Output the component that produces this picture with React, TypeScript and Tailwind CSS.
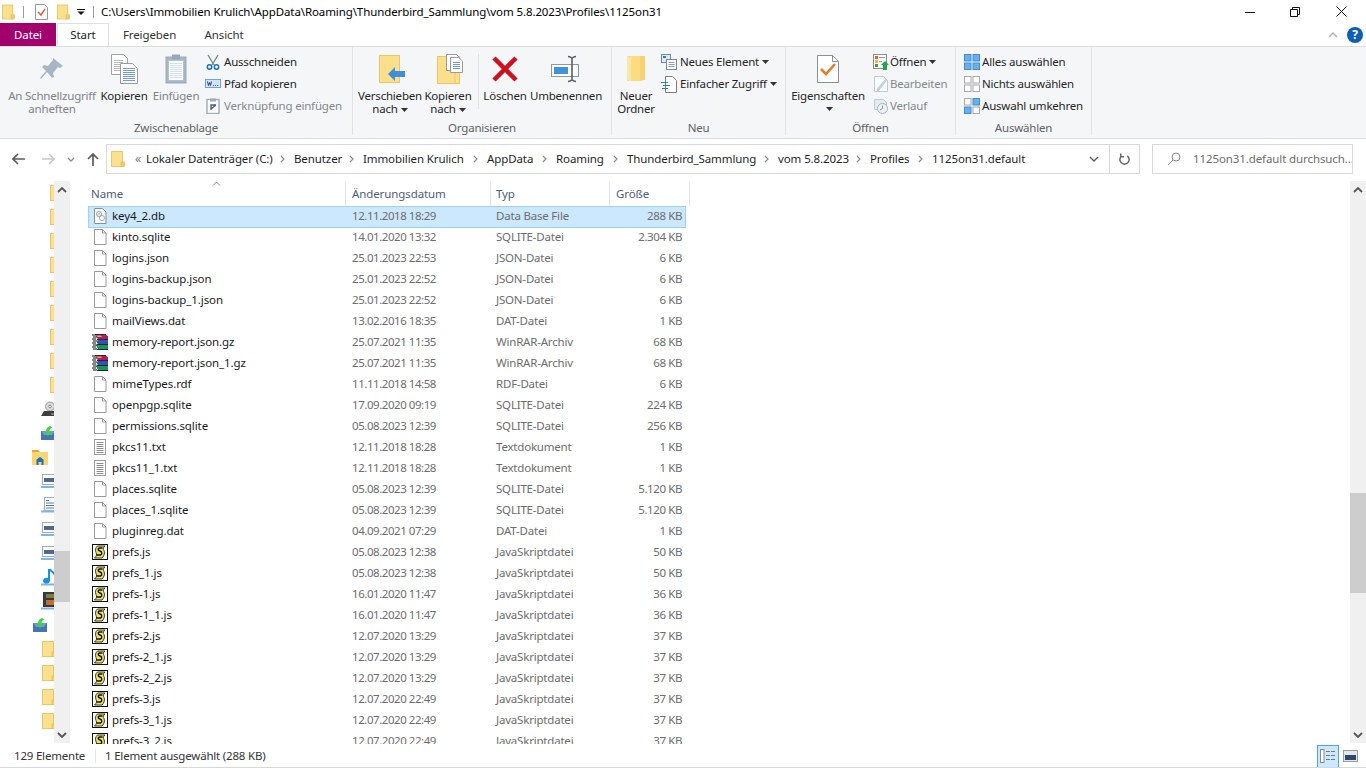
import React from "react";

const Folder = ({ className = "w-[14px] h-[16px]" }: { className?: string }) => (
  <svg viewBox="0 0 14 16" className={`${className} shrink-0`}>
    <rect x="0.5" y="0.5" width="11" height="15" fill="#fbe08f" stroke="#e8c766" />
    <rect x="10" y="11" width="3.5" height="4.5" fill="#f4cd6a" stroke="#e2bc58" strokeWidth="0.7" />
  </svg>
);
const Page = ({ children }: { children?: React.ReactNode }) => (
  <svg viewBox="0 0 16 18" className="w-[16px] h-[18px] shrink-0">
    <path d="M2.5 1.5h8l3.5 3.5v11.5h-11.5z" fill="#fff" stroke="#9a9a9a" />
    <path d="M10.5 1.5v3.5h3.5" fill="none" stroke="#9a9a9a" />
    {children}
  </svg>
);
const TextFile = () => (
  <svg viewBox="0 0 16 18" className="w-[16px] h-[18px] shrink-0">
    <rect x="2.5" y="1.5" width="11" height="15" fill="#fff" stroke="#9a9a9a" />
    {[4, 6, 8, 10, 12, 14].map((y) => (
      <path key={y} d={`M4.5 ${y + 0.5}h7`} stroke="#8c8c8c" />
    ))}
  </svg>
);
const KeyFile = () => (
  <svg viewBox="0 0 16 18" className="w-[16px] h-[18px] shrink-0">
    <path d="M2.5 1.5h8l3.5 3.5v11.5h-11.5z" fill="#f6fbff" stroke="#8d8d8d" />
    <circle cx="7" cy="7" r="2.5" fill="none" stroke="#9b9b9b" />
    <circle cx="10" cy="11" r="2.5" fill="none" stroke="#a8a8a8" />
    <circle cx="7" cy="7" r="0.8" fill="#9b9b9b" />
  </svg>
);
const Rar = () => (
  <svg viewBox="0 0 16 16" className="w-[16px] h-[16px] shrink-0">
    <path d="M3 1h11l2 1v3H5z" fill="#b5176a" />
    <path d="M4 1.500h5l1 1.500H6z" fill="#e8b040" />
    <path d="M4 6h12v4.500H6z" fill="#2a56b0" />
    <path d="M4 11h12v4.500H6z" fill="#0f9a5c" />
    <path d="M0 .5h3.500L6 5.500 3.500 10.500 6 15.500H2.500L0 10.500 2.500 5.500z" fill="#fff" />
    {[1, 3, 5, 7, 9, 11, 13, 15].map((y, i) => (
      <path key={y} d={`M${i % 2 ? 1 : 0} ${y}h4`} stroke="#111" strokeWidth="1" />
    ))}
    <path d="M5 5.500h11M5 10.500h11M5 15.500h11M3 .5h11" stroke="#111" strokeWidth="0.9" />
  </svg>
);
const Js = () => (
  <svg viewBox="0 0 16 16" className="w-[16px] h-[16px] shrink-0">
    <rect x="0.5" y="0.5" width="15" height="15" fill="#fff" stroke="#111" />
    <path d="M5.500 2h7.500c-2 1.500-1.800 3-1 4.500 1 2 .5 5-2 7.500H2.500c2-1.500 2.500-3.500 1.500-5.500C3 6 3.500 3.500 5.500 2z" fill="#eee65e" stroke="#222" strokeWidth="0.9" />
    <path d="M10.500 4H7.500C5.500 4.500 6 6.500 8 7s2.500 3 .5 4H4.500" fill="none" stroke="#111" strokeWidth="1.4" />
  </svg>
);

type Kind = "page" | "text" | "key" | "rar" | "js";
const FileIcon = ({ kind }: { kind: Kind }) =>
  kind === "page" ? <Page /> : kind === "text" ? <TextFile /> : kind === "key" ? <KeyFile /> : kind === "rar" ? <Rar /> : <Js />;

const files: [string, string, string, string, Kind][] = [
  ["key4_2.db", "12.11.2018 18:29", "Data Base File", "288 KB", "key"],
  ["kinto.sqlite", "14.01.2020 13:32", "SQLITE-Datei", "2.304 KB", "page"],
  ["logins.json", "25.01.2023 22:53", "JSON-Datei", "6 KB", "page"],
  ["logins-backup.json", "25.01.2023 22:52", "JSON-Datei", "6 KB", "page"],
  ["logins-backup_1.json", "25.01.2023 22:52", "JSON-Datei", "6 KB", "page"],
  ["mailViews.dat", "13.02.2016 18:35", "DAT-Datei", "1 KB", "page"],
  ["memory-report.json.gz", "25.07.2021 11:35", "WinRAR-Archiv", "68 KB", "rar"],
  ["memory-report.json_1.gz", "25.07.2021 11:35", "WinRAR-Archiv", "68 KB", "rar"],
  ["mimeTypes.rdf", "11.11.2018 14:58", "RDF-Datei", "6 KB", "page"],
  ["openpgp.sqlite", "17.09.2020 09:19", "SQLITE-Datei", "224 KB", "page"],
  ["permissions.sqlite", "05.08.2023 12:39", "SQLITE-Datei", "256 KB", "page"],
  ["pkcs11.txt", "12.11.2018 18:28", "Textdokument", "1 KB", "text"],
  ["pkcs11_1.txt", "12.11.2018 18:28", "Textdokument", "1 KB", "text"],
  ["places.sqlite", "05.08.2023 12:39", "SQLITE-Datei", "5.120 KB", "page"],
  ["places_1.sqlite", "05.08.2023 12:39", "SQLITE-Datei", "5.120 KB", "page"],
  ["pluginreg.dat", "04.09.2021 07:29", "DAT-Datei", "1 KB", "page"],
  ["prefs.js", "05.08.2023 12:38", "JavaSkriptdatei", "50 KB", "js"],
  ["prefs_1.js", "05.08.2023 12:38", "JavaSkriptdatei", "50 KB", "js"],
  ["prefs-1.js", "16.01.2020 11:47", "JavaSkriptdatei", "36 KB", "js"],
  ["prefs-1_1.js", "16.01.2020 11:47", "JavaSkriptdatei", "36 KB", "js"],
  ["prefs-2.js", "12.07.2020 13:29", "JavaSkriptdatei", "37 KB", "js"],
  ["prefs-2_1.js", "12.07.2020 13:29", "JavaSkriptdatei", "37 KB", "js"],
  ["prefs-2_2.js", "12.07.2020 13:29", "JavaSkriptdatei", "37 KB", "js"],
  ["prefs-3.js", "12.07.2020 22:49", "JavaSkriptdatei", "37 KB", "js"],
  ["prefs-3_1.js", "12.07.2020 22:49", "JavaSkriptdatei", "37 KB", "js"],
  ["prefs-3_2.js", "12.07.2020 22:49", "JavaSkriptdatei", "37 KB", "js"],
];

const Caret = () => (
  <svg viewBox="0 0 7 4" className="inline-block w-[7px] h-[4px] ml-[3px] align-middle"><path d="M0 0h7L3.5 4z" fill="#333" /></svg>
);

/* ribbon large icons */
const PinIcon = () => (
  <svg viewBox="0 0 24 24" className="w-[24px] h-[24px]">
    <path d="M13 1l10 8-3 2-2-1-5 6 1 4-2 1-5-6-6 7-1-1 6-7-4-4 2-2 4 1 5-6z" fill="#a9b5c6" />
  </svg>
);
const DocLines = ({ x, y, w, h }: { x: number; y: number; w: number; h: number }) => (
  <g>
    <path d={`M${x + .5} ${y + .5}h${w * 0.7}l${w * 0.3} ${w * 0.3}v${h - w * 0.3}h-${w}z`} fill="#fff" stroke="#9b9b9b" />
    {Array.from({ length: Math.floor((h - 6) / 2) }).map((_, i) => (
      <path key={i} d={`M${x + 3} ${y + 5.5 + i * 2}h${w - 5}`} stroke="#6f9ed3" />
    ))}
  </g>
);
const CopyIcon = () => (
  <svg viewBox="0 0 27 30" className="w-[27px] h-[30px]">
    <path d="M.5.5h12l4 4v16H.5z" fill="#fff" stroke="#a0a0a0" />
    {[6, 8, 10, 12, 14, 16].map((y) => <path key={y} d={`M3 ${y + .5}h9`} stroke="#b9b9b9" />)}
    <DocLines x={9} y={9} w={17} h={20} />
  </svg>
);
const PasteIcon = () => (
  <svg viewBox="0 0 22 30" className="w-[22px] h-[30px]">
    <rect x="1" y="3" width="20" height="26" fill="#a8b6c8" stroke="#9aa9bc" />
    <rect x="3.5" y="6.5" width="15" height="20" fill="#fdfdfd" stroke="#b7c1cf" />
    {[9, 11, 13, 15, 17, 19, 21, 23].map((y) => <path key={y} d={`M5 ${y + .5}h12`} stroke="#cfe0f2" />)}
    <rect x="7" y="0.5" width="8" height="5" fill="#98a6b8" />
  </svg>
);
const ScissorsIcon = () => (
  <svg viewBox="0 0 16 16" className="w-[16px] h-[16px]">
    <path d="M3 1l6 10M13 1l-6 10" stroke="#7d8794" strokeWidth="1.4" fill="none" />
    <circle cx="4.5" cy="13" r="2.2" fill="none" stroke="#1d6fb8" strokeWidth="1.5" />
    <circle cx="11.5" cy="13" r="2.2" fill="none" stroke="#1d6fb8" strokeWidth="1.5" />
  </svg>
);
const PathIcon = () => (
  <svg viewBox="0 0 16 16" className="w-[16px] h-[16px]">
    <rect x="0.5" y="3.5" width="15" height="8" fill="#cfe4f7" stroke="#6ea6d8" />
    <path d="M2.5 5.5l1 4 1-3 1 3 1-4M8 9.5h.8M10.2 9.5h.8M12.4 9.5h.8" fill="none" stroke="#29425e" />
  </svg>
);
const LinkPasteIcon = () => (
  <svg viewBox="0 0 16 16" className="w-[16px] h-[16px]">
    <rect x="2" y="1.5" width="12" height="14" fill="#fff" stroke="#9dabbd" strokeWidth="1.4" />
    <rect x="5" y="0.5" width="6" height="3" fill="#9dabbd" />
    <path d="M6 12V7h5M6 11l5-4" fill="none" stroke="#3a5c82" strokeWidth="1.3" />
  </svg>
);
const MoveIcon = () => (
  <svg viewBox="0 0 26 28" className="w-[26px] h-[28px] ml-[4px]">
    <rect x="0.5" y="0.5" width="20" height="27" fill="#fcdf8a" stroke="#e8c66a" />
    <path d="M9 19l7-7v4h10v6H16v4z" fill="#3d8fd8" />
  </svg>
);
const CopyToIcon = () => (
  <svg viewBox="0 0 26 30" className="w-[26px] h-[30px] ml-[3px]">
    <rect x="0.5" y="2.5" width="22" height="27" fill="#fcdf8a" stroke="#e8c66a" />
    <path d="M18 2.5v27" stroke="#e8c66a" />
    <path d="M9.5.5h10l3 3v13h-13z" fill="#fff" stroke="#9b9b9b" />
    <DocLines x={13} y={3} w={12} h={15} />
  </svg>
);
const DeleteIcon = () => (
  <svg viewBox="0 0 26 26" className="w-[26px] h-[26px]">
    <path d="M2 2l22 22M24 2L2 24" stroke="#d0101f" strokeWidth="4.5" />
  </svg>
);
const RenameIcon = () => (
  <svg viewBox="0 0 30 28" className="w-[30px] h-[28px]">
    <rect x="0.5" y="9.5" width="27" height="12" fill="#fff" stroke="#8d98a6" />
    <rect x="3" y="12" width="14" height="7" fill="#3d93de" />
    <path d="M17 1.5c2 0 3 1 4 1.5 1-.5 2-1.5 4-1.5M21 3v22M17 26.5c2 0 3-1 4-1.5 1 .5 2 1.5 4 1.5" fill="none" stroke="#56606d" strokeWidth="1.6" />
  </svg>
);
const NewFolderIcon = () => (
  <svg viewBox="0 0 20 28" className="w-[20px] h-[28px]">
    <path d="M1 1h18v22l-3 3H1z" fill="#fbdc80" />
    <path d="M1 1l4 2v24l-4-3z" fill="#f7e6ae" />
    <path d="M14 1h5v24h-5z" fill="#f8d06f" />
  </svg>
);
const NewItemIcon = () => (
  <svg viewBox="0 0 16 16" className="w-[16px] h-[16px]">
    <rect x="0.5" y="0.5" width="9" height="8" fill="#dbe9f7" stroke="#6a8cb0" />
    <rect x="2" y="2" width="3" height="2" fill="#3a78b8" />
    <rect x="5.5" y="5.5" width="10" height="10" fill="#fff" stroke="#7b8794" />
    <path d="M7.5 8.5h6M7.5 10.5h6M7.5 12.5h6" stroke="#7ca6d0" />
  </svg>
);
const EasyIcon = () => (
  <svg viewBox="0 0 16 18" className="w-[16px] h-[18px]">
    <path d="M4.5 1.5h7l4 4v12h-11z" fill="#fff" stroke="#7c7c7c" />
    <path d="M0 7.5h7M2 10.5h7M1 13.5h6" stroke="#2a7fc4" />
  </svg>
);
const PropsIcon = () => (
  <svg viewBox="0 0 22 28" className="w-[22px] h-[28px]">
    <path d="M.5.5h15l6 6v21H.5z" fill="#fff" stroke="#8f8f8f" />
    <path d="M15.5.5v6h6" fill="none" stroke="#8f8f8f" />
    <path d="M4 14l5 5 9-10" fill="none" stroke="#e07f2e" strokeWidth="2.6" />
  </svg>
);
const OpenIcon = () => (
  <svg viewBox="0 0 16 16" className="w-[16px] h-[16px]">
    <rect x="0.5" y="0.5" width="13" height="14" fill="#fff" stroke="#8b8b8b" />
    <rect x="2" y="2" width="3" height="3" fill="#e25d30" /><path d="M6 3.5h6" stroke="#999" />
    <rect x="2" y="6" width="3" height="3" fill="#e9b834" /><path d="M6 7.5h3" stroke="#999" />
    <rect x="2" y="10" width="3" height="3" fill="#4a9a3d" />
    <path d="M12 7l4 4h-2v5h-4v-5H8z" fill="#22a84a" />
  </svg>
);
const EditIcon = () => (
  <svg viewBox="0 0 16 18" className="w-[16px] h-[18px]">
    <path d="M1.5 1.5h9l4 4v11h-13z" fill="#fafcfe" stroke="#bccadb" />
    <path d="M14 5L6 15l-2 1 .5-2.5L13 4z" fill="#c9d7e8" stroke="#aebfd2" strokeWidth=".7" />
  </svg>
);
const HistoryIcon = () => (
  <svg viewBox="0 0 16 16" className="w-[16px] h-[16px]">
    <path d="M1.5 1.5h9l3 3v7h-12z" fill="#e4ebf3" stroke="#c2ccd8" />
    <circle cx="9.5" cy="10.5" r="5" fill="#eef2f6" stroke="#a5b0bd" />
    <path d="M9.5 7.5v3l-2.5 1.5" fill="none" stroke="#8b97a5" />
  </svg>
);
const Grid = ({ fills }: { fills: string[] }) => (
  <svg viewBox="0 0 16 16" className="w-[16px] h-[16px]">
    {[[0, 0], [8.5, 0], [0, 8.5], [8.5, 8.5]].map(([x, y], i) => (
      <rect key={i} x={x + 0.5} y={y + 0.5} width="6.5" height="6.5" fill={fills[i]} stroke={fills[i] === "#fff" ? "#a8a8a8" : "#3f8fd2"} />
    ))}
  </svg>
);

const Large = ({ icon, lines, caret, muted, boxClass }: { icon: React.ReactNode; lines: string[]; caret?: boolean; muted?: boolean; boxClass: string }) => (
  <div className={`${boxClass} flex flex-col items-center shrink-0`}>
    <div className="h-[36px] mb-[2px] flex items-center justify-center">{icon}</div>
    <div className={`text-center leading-[13px] whitespace-nowrap ${muted ? "text-[#7f8388]" : "text-[#262626]"}`}>
      {lines.map((l, i) => (
        <div key={i}>
          {l}
          {caret && i === lines.length - 1 && l && <Caret />}
        </div>
      ))}
    </div>
  </div>
);

const Small = ({ icon, label, caret, muted, textClass }: { icon: React.ReactNode; label: string; caret?: boolean; muted?: boolean; textClass: string }) => (
  <div className="h-[22px] flex items-center whitespace-nowrap">
    <div className={`${textClass} flex items-center justify-start shrink-0`}>{icon}</div>
    <span className={muted ? "text-[#84888d]" : "text-[#262626]"}>{label}</span>
    {caret && <Caret />}
  </div>
);

const Group = ({ label, w, children }: { label: string; w: string; children: React.ReactNode }) => (
  <div className={`${w} shrink-0 flex flex-col border-r border-[#e2e3e5] mb-[3px]`}>
    <div className="h-[72px] flex pt-[4px]">{children}</div>
    <div className="text-center text-[#5e6165] leading-[14px] mt-[4px]">{label}</div>
  </div>
);

const VSep = () => <div className="w-px h-[55px] mt-[3px] bg-[#e2e3e5] shrink-0" />;

const crumbs: [string, string][] = [
  ["Lokaler Datenträger (C:)", "w-[148px]"],
  ["Benutzer", "w-[69px]"],
  ["Immobilien Krulich", "w-[124px]"],
  ["AppData", "w-[69px]"],
  ["Roaming", "w-[71px]"],
  ["Thunderbird_Sammlung", "w-[151px]"],
  ["vom 5.8.2023", "w-[92px]"],
  ["Profiles", "w-[62px]"],
  ["1125on31.default", "w-[100px]"],
];

const Chev = ({ up, className = "" }: { up?: boolean; className?: string }) => (
  <svg viewBox="0 0 10 6" className={`w-[10px] h-[6px] ${className}`}>
    <path d={up ? "M1 5l4-4 4 4" : "M1 1l4 4 4-4"} fill="none" stroke="#555" strokeWidth="1.8" />
  </svg>
);

const Monitor = () => (
  <svg viewBox="0 0 14 16" className="w-[14px] h-[16px] shrink-0">
    <rect x="1.5" y="1.5" width="12" height="10" fill="#fff" stroke="#9bb0c8" />
    <rect x="3" y="5" width="10" height="4" fill="#4d6a8c" />
    <path d="M0 14h14" stroke="#7db5e5" strokeWidth="2" />
  </svg>
);
const DocMon = () => (
  <svg viewBox="0 0 14 16" className="w-[14px] h-[16px] shrink-0">
    <rect x="3.5" y="0.5" width="10" height="13" fill="#fff" stroke="#9bb0c8" />
    <path d="M5 3.5h3M5 6h8M5 8.5h8M5 11h8" stroke="#4d7ea8" />
    <path d="M0 14.5h14" stroke="#7db5e5" strokeWidth="2" />
  </svg>
);
const Music = () => (
  <svg viewBox="0 0 14 18" className="w-[14px] h-[18px] shrink-0">
    <path d="M9 1v11.5a3.5 3 0 1 1-2-2.5V1z" fill="#1c8fe0" />
    <path d="M9 1c1 3 4 3 5 6" stroke="#1c8fe0" strokeWidth="2" fill="none" />
    <path d="M0 16.5h14" stroke="#7db5e5" strokeWidth="2" />
  </svg>
);
const Video = () => (
  <svg viewBox="0 0 14 18" className="w-[14px] h-[18px] shrink-0">
    <rect x="2" y="0" width="12" height="15" fill="#303a44" />
    <rect x="5" y="2" width="9" height="4" fill="#8c7a3c" />
    <rect x="5" y="8" width="9" height="5" fill="#c86a2c" />
    <path d="M0 16.5h14" stroke="#7db5e5" strokeWidth="2" />
  </svg>
);
const Drive = () => (
  <svg viewBox="0 0 14 16" className="w-[14px] h-[16px] shrink-0">
    <circle cx="9" cy="5.5" r="4.5" fill="#d9d9d9" stroke="#9a9a9a" />
    <circle cx="9" cy="5.5" r="1.3" fill="#fff" stroke="#888" />
    <path d="M3 10h11v5H0z" fill="#3f3f3f" />
    <path d="M10 13h3" stroke="#8fd18f" />
  </svg>
);
const Sync = () => (
  <svg viewBox="0 0 14 14" className="w-[14px] h-[14px] shrink-0">
    <path d="M0 5h14v9H0z" fill="#4574b0" />
    <path d="M0 5l3 4h8l3-4" fill="#6f9ad0" />
    <path d="M9 0c-3 1-4 3-4 5H3l4 5 4-5H8.5c0-1 1-3 3-3.500z" fill="#3fd24a" />
  </svg>
);
const HomeFolder = () => (
  <svg viewBox="0 0 16 15" className="w-[16px] h-[15px] shrink-0">
    <path d="M0 0h6l2 2H0z" fill="#e8a33a" />
    <rect x="0" y="2" width="16" height="13" fill="#fbd56e" />
    <path d="M4.500 15V9.500L8 7l3.500 2.500V15H9.500v-3h-3v3z" fill="#1b6fc2" />
  </svg>
);
const Globe = () => (
  <svg viewBox="0 0 16 8" className="w-[16px] h-[7px] shrink-0 self-end">
    <path d="M2 8a6 6 0 0 1 12 0z" fill="#4f9fdc" />
    <path d="M0 7.500h16" stroke="#2a74b5" />
  </svg>
);

const navRows: [React.ReactNode, string][] = [
  ...Array.from({ length: 9 }, (): [React.ReactNode, string] => [<Folder className="w-[14px] h-[16px]" />, "pl-[50px]"]),
  [<Drive />, "pl-[41px]"],
  [<Sync />, "pl-[41px]"],
  [<HomeFolder />, "pl-[32px]"],
  [<Monitor />, "pl-[41px]"],
  [<DocMon />, "pl-[41px]"],
  [<Monitor />, "pl-[41px]"],
  [<Monitor />, "pl-[41px]"],
  [<Music />, "pl-[41px]"],
  [<Video />, "pl-[41px]"],
  [<Sync />, "pl-[33px]"],
  [<Folder className="w-[14px] h-[16px]" />, "pl-[42px]"],
  [<Folder className="w-[14px] h-[16px]" />, "pl-[42px]"],
  [<Folder className="w-[14px] h-[16px]" />, "pl-[42px]"],
  [<Folder className="w-[14px] h-[16px]" />, "pl-[42px]"],
  [<Globe />, "pl-[32px]"],
];

const Scrollbar = ({ thumbTop, thumbH, w }: { thumbTop: string; thumbH: string; w: string }) => (
  <div className={`${w} shrink-0 bg-[#f0f0f0] mt-[3px] mb-[1px] flex flex-col items-center relative`}>
    <div className="h-[17px] flex items-center justify-center shrink-0"><Chev up /></div>
    <div className={`${thumbTop} ${thumbH} w-full bg-[#cdcdcd] shrink-0`} />
    <div className="flex-1" />
    <div className="h-[17px] flex items-center justify-center shrink-0"><Chev /></div>
  </div>
);

export default function App() {
  return (
    <div className="w-[1366px] h-[768px] overflow-hidden bg-white flex flex-col font-['Noto_Sans','Open_Sans',sans-serif] text-[11.5px] text-[#1a1a1a] tracking-[-0.1px]">
      {/* title bar */}
      <div className="h-[23px] flex items-center shrink-0 pl-[2px]">
        <Folder className="w-[13px] h-[16px]" />
        <div className="w-px h-[12px] bg-[#9a9a9a] ml-[8px]" />
        <svg viewBox="0 0 13 16" className="w-[13px] h-[16px] ml-[11px]">
          <path d="M.5.5h9l3 3v12H.5z" fill="#fff" stroke="#999" />
          <path d="M3 8l3 3 4-6" fill="none" stroke="#d8603a" strokeWidth="1.5" />
        </svg>
        <Folder className="w-[13px] h-[16px] ml-[9px]" />
        <svg viewBox="0 0 8 6" className="w-[8px] h-[6px] ml-[7px]">
          <path d="M0 .5h8" stroke="#111" /><path d="M.5 2.500h7L4 6z" fill="#111" />
        </svg>
        <div className="w-px h-[12px] bg-[#9a9a9a] ml-[8px]" />
        <div className="ml-[7px] whitespace-nowrap text-black">C:\Users\Immobilien Krulich\AppData\Roaming\Thunderbird_Sammlung\vom 5.8.2023\Profiles\1125on31</div>
        <div className="flex-1" />
        <svg viewBox="0 0 10 10" className="w-[10px] h-[10px]"><path d="M0 5.500h10" stroke="#111" /></svg>
        <svg viewBox="0 0 10 10" className="w-[10px] h-[10px] ml-[35px]"><path d="M.5 2.500h7v7h-7zM2.500 2.500v-2h7v7h-2" fill="none" stroke="#111" /></svg>
        <svg viewBox="0 0 11 11" className="w-[11px] h-[11px] ml-[36px] mr-[19px]"><path d="M.5.5l10 10M10.500.5l-10 10" stroke="#111" /></svg>
      </div>

      {/* tabs */}
      <div className="h-[23px] flex shrink-0 items-stretch">
        <div className="w-[56px] bg-[#a2006d] text-white flex items-center justify-center">Datei</div>
        <div className="w-[52px] ml-[1px] border-x border-t border-[#e0e1e3] flex items-center justify-center">Start</div>
        <div className="ml-[14px] w-[53px] flex items-center justify-center text-[#333]">Freigeben</div>
        <div className="ml-[28px] w-[40px] flex items-center justify-center text-[#333]">Ansicht</div>
        <div className="flex-1" />
        <div className="flex items-center pr-[3px]">
          <svg viewBox="0 0 10 6" className="w-[10px] h-[6px] mr-[9px]"><path d="M1 5l4-4 4 4" fill="none" stroke="#b5b5b5" strokeWidth="1.5" /></svg>
          <div className="w-[16px] h-[16px] rounded-full bg-[#0d5fb5] text-white font-bold text-[12px] leading-[16px] text-center">?</div>
        </div>
      </div>

      {/* ribbon */}
      <div className="h-[93px] bg-[#f5f6f7] border-y border-[#dadbdc] flex shrink-0 tracking-[-0.2px]">
        <Group label="Zwischenablage" w="w-[353px]">
          <Large boxClass="w-[104px]" icon={<PinIcon />} lines={["An Schnellzugriff", "anheften"]} muted />
          <Large boxClass="w-[48px] -ml-[4px]" icon={<CopyIcon />} lines={["Kopieren"]} />
          <Large boxClass="w-[52px] ml-[2px]" icon={<PasteIcon />} lines={["Einfügen"]} muted />
          <div className="ml-[3px]">
            <Small textClass="w-[19px]" icon={<ScissorsIcon />} label="Ausschneiden" />
            <Small textClass="w-[19px]" icon={<PathIcon />} label="Pfad kopieren" />
            <Small textClass="w-[19px]" icon={<LinkPasteIcon />} label="Verknüpfung einfügen" muted />
          </div>
        </Group>
        <Group label="Organisieren" w="w-[259px]">
          <Large boxClass="w-[66px] ml-[4px]" icon={<MoveIcon />} lines={["Verschieben", "nach"]} caret />
          <Large boxClass="w-[50px]" icon={<CopyToIcon />} lines={["Kopieren", "nach"]} caret />
          <div className="w-[5px]" />
          <VSep />
          <Large boxClass="w-[46px] ml-[3px]" icon={<DeleteIcon />} lines={["Löschen"]} />
          <Large boxClass="w-[74px] ml-[1px]" icon={<RenameIcon />} lines={["Umbenennen"]} />
        </Group>
        <Group label="Neu" w="w-[174px]">
          <Large boxClass="w-[44px] ml-[2px]" icon={<NewFolderIcon />} lines={["Neuer", "Ordner"]} />
          <div className="ml-[3px]">
            <Small textClass="w-[19px]" icon={<NewItemIcon />} label="Neues Element" caret />
            <Small textClass="w-[19px]" icon={<EasyIcon />} label="Einfacher Zugriff" caret />
          </div>
        </Group>
        <Group label="Öffnen" w="w-[170px]">
          <div className="ml-[2px]">
            <Large boxClass="w-[80px]" icon={<PropsIcon />} lines={["Eigenschaften"]} />
            <div className="text-center leading-[11px] w-[80px]"><Caret /></div>
          </div>
          <div className="ml-[5px]">
            <Small textClass="w-[17px]" icon={<OpenIcon />} label="Öffnen" caret />
            <Small textClass="w-[17px]" icon={<EditIcon />} label="Bearbeiten" muted />
            <Small textClass="w-[17px]" icon={<HistoryIcon />} label="Verlauf" muted />
          </div>
        </Group>
        <Group label="Auswählen" w="w-[136px]">
          <div className="ml-[8px]">
            <Small textClass="w-[18px]" icon={<Grid fills={["#69b0ea", "#69b0ea", "#69b0ea", "#69b0ea"]} />} label="Alles auswählen" />
            <Small textClass="w-[18px]" icon={<Grid fills={["#fff", "#fff", "#fff", "#fff"]} />} label="Nichts auswählen" />
            <Small textClass="w-[18px]" icon={<Grid fills={["#fff", "#69b0ea", "#69b0ea", "#fff"]} />} label="Auswahl umkehren" />
          </div>
        </Group>
      </div>

      {/* address row */}
      <div className="h-[39px] flex items-center shrink-0 pl-[12px] pt-[1px]">
        <svg viewBox="0 0 14 12" className="w-[14px] h-[12px]"><path d="M1 6h12M6 1L1 6l5 5" fill="none" stroke="#5c5c5c" strokeWidth="1.6" /></svg>
        <svg viewBox="0 0 14 12" className="w-[14px] h-[12px] ml-[15px]"><path d="M1 6h12M8 1l5 5-5 5" fill="none" stroke="#c8c8c8" strokeWidth="1.6" /></svg>
        <svg viewBox="0 0 8 5" className="w-[8px] h-[5px] ml-[12px]"><path d="M1 1l3 3 3-3" fill="none" stroke="#8a8a8a" strokeWidth="1.3" /></svg>
        <svg viewBox="0 0 12 14" className="w-[12px] h-[14px] ml-[12px]"><path d="M6 14V2M1 7l5-5 5 5" fill="none" stroke="#5c5c5c" strokeWidth="1.7" /></svg>
        <div className="ml-[7px] w-[1034px] h-[30px] border border-[#d9d9d9] flex items-center text-[#1f1f1f]">
          <Folder className="w-[14px] h-[16px] ml-[4px]" />
          <span className="ml-[6px] w-[14px] text-[#777] text-[12px] shrink-0 text-center">«</span>
          <div className="flex items-center ml-[1px] whitespace-nowrap">
            {crumbs.map(([c, w], i) => (
              <div key={c} className={`${w} flex items-center shrink-0`}>
                <span className="flex-1">{c}</span>
                {i < crumbs.length - 1 && (
                  <svg viewBox="0 0 5 8" className="w-[5px] h-[8px] mr-[9px]"><path d="M1 1l3 3-3 3" fill="none" stroke="#8a8a8a" strokeWidth="1.2" /></svg>
                )}
              </div>
            ))}
          </div>
          <div className="flex-1" />
          <svg viewBox="0 0 10 6" className="w-[10px] h-[6px] mr-[10px]"><path d="M1 1l4 4 4-4" fill="none" stroke="#555" strokeWidth="1.3" /></svg>
          <div className="w-[30px] h-full border-l border-[#d9d9d9] flex items-center justify-center shrink-0">
            <svg viewBox="0 0 14 14" className="w-[13px] h-[13px]"><path d="M4 3a5 5 0 1 0 6 0M3 .5V4h3.500" fill="none" stroke="#666" strokeWidth="1.6" /></svg>
          </div>
        </div>
        <div className="ml-[12px] w-[201px] h-[30px] border border-[#d9d9d9] flex items-center text-[#6d6d6d] whitespace-nowrap overflow-hidden">
          <svg viewBox="0 0 14 14" className="w-[14px] h-[14px] ml-[14px] shrink-0"><circle cx="9" cy="5" r="4" fill="none" stroke="#8a8a8a" /><path d="M6 8l-5 5" stroke="#8a8a8a" /></svg>
          <span className="ml-[12px]">1125on31.default durchsuch...</span>
        </div>
      </div>

      {/* main */}
      <div className="flex-1 flex min-h-0">
        <div className="w-[54px] shrink-0 overflow-hidden pt-[3px]">
          {navRows.map(([icon, pl], i) => (
            <div key={i} className={`h-[24px] flex items-center overflow-hidden ${pl}`}>{icon}</div>
          ))}
        </div>
        <Scrollbar w="w-[16px]" thumbTop="mt-[353px]" thumbH="h-[51px]" />
        <div className="flex-1 min-w-0 overflow-hidden pl-[18px] pt-[4px] relative">
          <div className="absolute left-[142px] top-[3px]">
            <svg viewBox="0 0 9 5" className="w-[9px] h-[5px]"><path d="M1 4.500L4.500 1 8 4.500" fill="none" stroke="#888" /></svg>
          </div>
          <div className="flex h-[24px] text-[#4c607a] items-center">
            <div className="w-[258px] h-full border-r border-[#e5e5e5] pl-[3px] flex items-center">Name</div>
            <div className="w-[145px] h-full border-r border-[#e5e5e5] pl-[6px] flex items-center">Änderungsdatum</div>
            <div className="w-[119px] h-full border-r border-[#e5e5e5] pl-[5px] flex items-center">Typ</div>
            <div className="w-[80px] h-full border-r border-[#e5e5e5] pl-[6px] flex items-center">Größe</div>
          </div>
          {files.map(([n, d, t, s, k], i) => (
            <div
              key={n}
              className={`w-[598px] flex items-center whitespace-nowrap text-[#6d6d6d] pb-[2px] ${i === 0 ? "h-[22px] -mb-[1px] bg-[#cce8ff] border border-[#99d1ff]" : "h-[21px] border border-transparent"}`}
            >
              <div className="w-[257px] shrink-0 flex items-center pl-[3px] text-[#1a1a1a]">
                <div className="w-[16px] flex justify-center shrink-0"><FileIcon kind={k} /></div>
                <span className="ml-[4px]">{n}</span>
              </div>
              <div className="w-[145px] shrink-0 pl-[6px] tracking-[-0.45px]">{d}</div>
              <div className="w-[119px] shrink-0 pl-[5px] tracking-[-0.2px]">{t}</div>
              <div className="w-[72px] shrink-0 text-right tracking-[-0.4px]">{s}</div>
            </div>
          ))}
        </div>
        <Scrollbar w="w-[16px]" thumbTop="mt-[295px]" thumbH="h-[100px]" />
      </div>

      {/* status bar */}
      <div className="h-[24px] shrink-0 flex items-center pl-[14px] text-[#333] border-b border-[#d8d8d8] tracking-[-0.2px]">
        <span className="w-[81px] whitespace-nowrap">129 Elemente</span>
        <div className="w-px h-[14px] bg-[#e8e8e8]" />
        <span className="ml-[9px] whitespace-nowrap">1 Element ausgewählt (288 KB)</span>
        <div className="flex-1" />
        <div className="w-[22px] h-[22px] bg-[#cce8ff] border border-[#52a8d8] border-b-0 flex items-center justify-center">
          <svg viewBox="0 0 16 14" className="w-[16px] h-[14px]">
            <rect x="0.5" y="0.5" width="3.500" height="13" fill="#fff" stroke="#8a8a8a" />
            <path d="M6 2.500h4M11 2.500h4M6 6.500h4M11 6.500h4M6 10.500h4M11 10.500h4" stroke="#777" />
          </svg>
        </div>
        <svg viewBox="0 0 15 12" className="w-[15px] h-[12px] ml-[4px] mr-[8px]">
          <rect x="0.5" y="0.5" width="14" height="11" fill="#dfe8f1" stroke="#9a9a9a" />
          <rect x="2" y="5" width="11" height="5" fill="#2e4866" />
        </svg>
      </div>
    </div>
  );
}
